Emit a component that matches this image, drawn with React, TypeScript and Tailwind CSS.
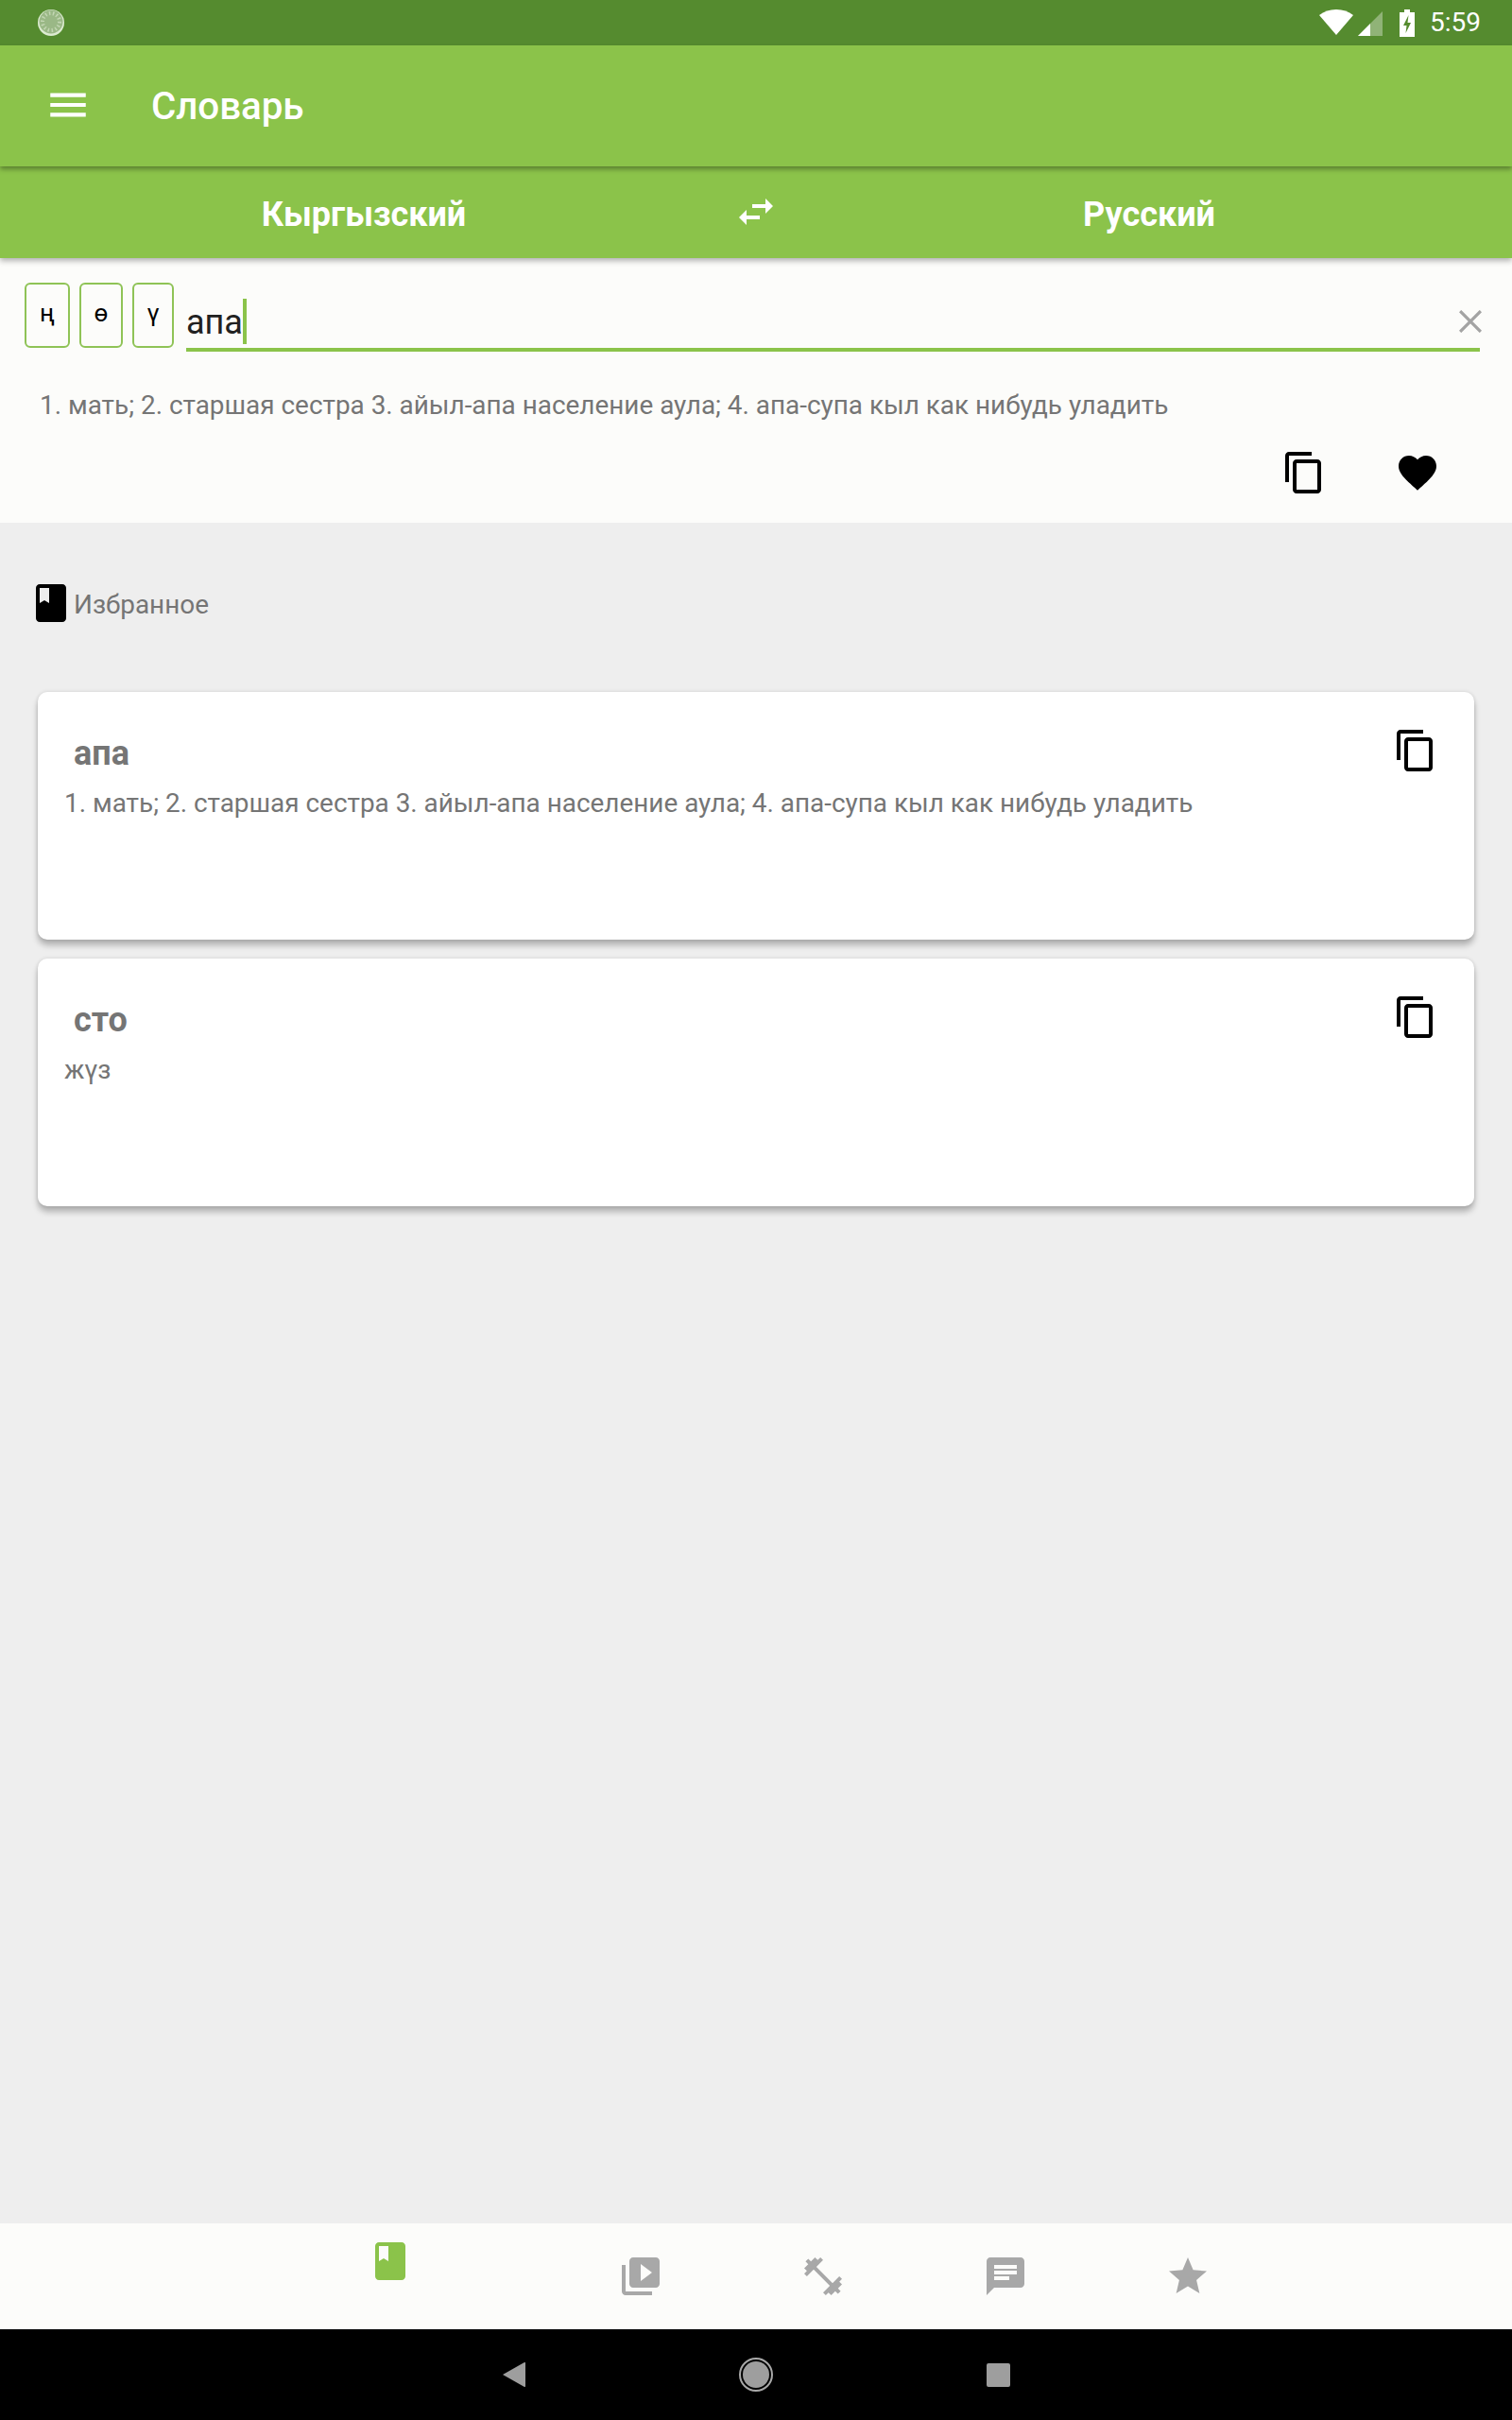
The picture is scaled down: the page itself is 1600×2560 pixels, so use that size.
import React from 'react';

const COPY = 'M16 1H4c-1.1 0-2 .9-2 2v14h2V3h12V1zm3 4H8c-1.1 0-2 .9-2 2v14c0 1.1.9 2 2 2h11c1.1 0 2-.9 2-2V7c0-1.1-.9-2-2-2zm0 16H8V7h11v14z';
const BOOK = 'M18 2H6c-1.1 0-2 .9-2 2v16c0 1.1.9 2 2 2h12c1.1 0 2-.9 2-2V4c0-1.1-.9-2-2-2zM6 4h5v8l-2.5-1.5L6 12V4z';
const NAV = [
  'M4 6H2v14c0 1.1.9 2 2 2h14v-2H4V6zm16-4H8c-1.1 0-2 .9-2 2v12c0 1.1.9 2 2 2h12c1.1 0 2-.9 2-2V4c0-1.1-.9-2-2-2zm-8 12.5v-9l6 4.5-6 4.5z',
  'M20.57 14.86L22 13.43 20.57 12 17 15.57 8.43 7 12 3.43 10.57 2 9.14 3.43 7.71 2 5.57 4.14 4.14 2.71 2.71 4.14l1.43 1.43L2 7.71l1.43 1.43L2 10.57 3.43 12 7 8.43 15.57 17 12 20.57 13.43 22l1.43-1.43L16.29 22l2.14-2.14 1.43 1.43 1.43-1.43-1.43-1.43L22 16.29z',
  'M20 2H4c-1.1 0-1.99.9-1.99 2L2 22l4-4h14c1.1 0 2-.9 2-2V4c0-1.1-.9-2-2-2zM6 9h12v2H6V9zm8 5H6v-2h8v2zm4-6H6V6h12v2z',
  'M12 17.27L18.18 21l-1.64-7.03L22 9.24l-7.19-.61L12 2 9.19 8.63 2 9.24l5.46 4.73L5.82 21z',
];
const DEFINITION = '1. мать; 2. старшая сестра 3. айыл-апа население аула; 4. апа-супа кыл как нибудь уладить';

function Icon({ d, className }: { d: string; className: string }) {
  return (
    <svg viewBox="0 0 24 24" fill="currentColor" className={className}>
      <path d={d} />
    </svg>
  );
}

function StatusBar() {
  return (
    <div className="h-[48px] bg-[#558b2f] flex items-center justify-between pl-[40px] pr-[33px]">
      <svg viewBox="0 0 28 28" className="w-[28px] h-[28px]">
        <circle cx="14" cy="14" r="14" fill="#dcebd0" />
        <circle cx="14" cy="13" r="12.5" fill="#9ab886" />
        <circle cx="14" cy="13" r="9" fill="none" stroke="#c3d6b3" strokeWidth="4" strokeDasharray="1.5 2.5" />
      </svg>
      <div className="flex items-center text-white">
        <svg viewBox="0 0 36 28" className="w-[36px] h-[28px]">
          <path d="M18 27L0 6C5 2 11 0 18 0s13 2 18 6z" fill="#fff" />
        </svg>
        <svg viewBox="0 0 26 26" className="w-[26px] h-[26px] ml-[5px] mt-[2px]">
          <path d="M26 0v26H0z" fill="#fff" opacity="0.35" />
          <path d="M13 13v13H0z" fill="#fff" />
        </svg>
        <svg viewBox="0 0 16 29" className="w-[16px] h-[29px] ml-[18px]">
          <path d="M5 0h6v3h5v26H0V3h5z" fill="#fff" />
          <path d="M9.5 6L4 17h3.5l-1 8L12 14H8.5z" fill="#558b2f" />
        </svg>
        <span className="ml-[16px] text-[28px] leading-none text-white">5:59</span>
      </div>
    </div>
  );
}

function Key({ letter, width }: { letter: string; width: string }) {
  return (
    <div className={`${width} h-[69px] border-2 border-[#8fc356] rounded-[6px] flex items-center justify-center text-[26px] text-black pb-[4px]`}>
      {letter}
    </div>
  );
}

function WordCard({ word, text }: { word: string; text: string }) {
  return (
    <div className="h-[262px] bg-white rounded-[10px] shadow-[0_6px_6px_rgba(0,0,0,0.25),0_0_4px_rgba(0,0,0,0.12)] flex justify-between pl-[28px] pr-[38px] pt-[38px]">
      <div className="text-[#757575]">
        <div className="ml-[10px] mt-[7px] text-[36px] leading-[40px] font-bold">{word}</div>
        <div className="mt-[15px] text-[27.9px] leading-[36px]">{text}</div>
      </div>
      <Icon d={COPY} className="w-[48px] h-[48px] text-black" />
    </div>
  );
}

export default function App() {
  return (
    <div className="w-[1600px] h-[2560px] flex flex-col bg-[#eeeeee] overflow-hidden font-['Roboto',sans-serif]">
      <StatusBar />

      {/* App bar */}
      <div className="relative z-20 h-[128px] bg-[#8bc34a] shadow-[0_3px_5px_rgba(0,0,0,0.35)] flex items-center text-white pl-[47px]">
        <svg viewBox="0 0 24 24" fill="currentColor" className="w-[50px] h-[50px] -mt-[3px]">
          <path d="M3 18h18v-2H3v2zm0-5h18v-2H3v2zm0-7v2h18V6H3z" />
        </svg>
        <h1 className="ml-[63px] mt-[3px] text-[40.3px] font-medium">Словарь</h1>
      </div>

      {/* Language switch */}
      <div className="relative z-10 h-[97px] shrink-0 bg-[#8bc34a] shadow-[0_3px_6px_rgba(0,0,0,0.3)] flex items-center text-white font-bold text-[36px]">
        <div className="w-[770px] text-center mt-[5px]">Кыргызский</div>
        <svg viewBox="0 0 24 24" fill="currentColor" className="w-[48px] h-[48px] ml-[6px] -mt-[1px]">
          <path d="M6.99 11L3 15l3.99 4v-3H14v-2H6.99v-3zM21 9l-3.99-4v3H10v2h7.01v3L21 9z" />
        </svg>
        <div className="flex-1 text-center mt-[5px] pl-[8px]">Русский</div>
      </div>

      {/* Search */}
      <div className="h-[280px] shrink-0 bg-[#fcfcfa] pl-[26px] pr-[34px] pt-[26px]">
        <div className="flex">
          <div className="flex gap-[10px]">
            <Key letter="ң" width="w-[48px]" />
            <Key letter="ө" width="w-[46px]" />
            <Key letter="ү" width="w-[44px]" />
          </div>
          <div className="relative flex-1 ml-[13px] mt-[1px] h-[72px] border-b-4 border-[#8bc34a] flex items-end pb-[4px]">
            <span className="text-[36px] leading-[46px] text-[#212121]">апа</span>
            <span className="w-[4px] h-[48px] bg-[#8bc34a]" />
            <svg viewBox="0 0 22 22" className="absolute right-[-2px] top-[28px] w-[24px] h-[24px]" stroke="#a3a3a3" strokeWidth="3">
              <path d="M1 1l20 20M21 1L1 21" />
            </svg>
          </div>
        </div>
        <p className="ml-[16px] mt-[39px] text-[27.9px] leading-[36px] text-[#757575]">{DEFINITION}</p>
        <div className="flex justify-end mt-[29px] pr-[42px] gap-[72px]">
          <Icon d={COPY} className="w-[48px] h-[48px] text-black" />
          <Icon d="M12 21.35l-1.45-1.32C5.4 15.36 2 12.28 2 8.5 2 5.42 4.42 3 7.5 3c1.74 0 3.41.81 4.5 2.09C13.09 3.81 14.76 3 16.5 3 19.58 3 22 5.42 22 8.5c0 3.78-3.4 6.86-8.55 11.54L12 21.35z" className="w-[48px] h-[48px] text-black" />
        </div>
      </div>

      {/* Favourites */}
      <main className="flex-1 px-[40px]">
        <div className="flex items-center h-[48px] mt-[61px] -ml-[10px]">
          <Icon d={BOOK} className="w-[48px] h-[48px] text-black" />
          <span className="mt-[3px] text-[27.9px] text-[#757575]">Избранное</span>
        </div>
        <div className="mt-[70px] flex flex-col gap-[20px]">
          <WordCard word="апа" text={DEFINITION} />
          <WordCard word="сто" text="жүз" />
        </div>
      </main>

      {/* Bottom navigation */}
      <nav className="h-[112px] shrink-0 bg-[#fcfcfa] flex justify-center pr-[2px]">
        <div className="w-[336px] pt-[16px] flex justify-center">
          <Icon d={BOOK} className="w-[48px] h-[48px] text-[#8bc34a]" />
        </div>
        {NAV.map((d) => (
          <div key={d} className="w-[193px] pt-[32px] flex justify-center">
            <Icon d={d} className="w-[48px] h-[48px] text-[#a8a8a8]" />
          </div>
        ))}
      </nav>

      {/* System navigation */}
      <div className="h-[96px] shrink-0 bg-black flex items-center justify-center">
        <div className="w-[256px] flex justify-center">
          <svg viewBox="0 0 24 26" className="w-[24px] h-[26px]">
            <path d="M24 1v24a1 1 0 0 1-1.5.8L0 13 22.5.2A1 1 0 0 1 24 1z" fill="#9e9e9e" />
          </svg>
        </div>
        <div className="w-[256px] flex justify-center">
          <div className="w-[36px] h-[36px] rounded-full border-2 border-[#a8a8a8] p-[2px]">
            <div className="w-full h-full rounded-full bg-[#9e9e9e]" />
          </div>
        </div>
        <div className="w-[256px] flex justify-center">
          <div className="w-[25px] h-[25px] rounded-[2px] bg-[#9e9e9e]" />
        </div>
      </div>
    </div>
  );
}
